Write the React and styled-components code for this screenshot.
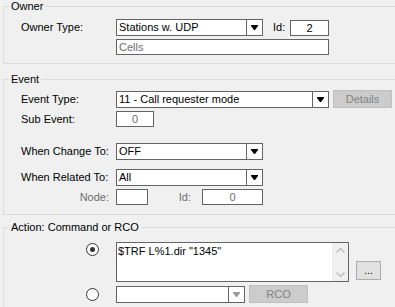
import styled, { createGlobalStyle } from 'styled-components'

const GlobalStyle = createGlobalStyle`
  html, body {
    margin: 0;
    padding: 0;
    background: #f0f0f0;
    overflow: hidden;
  }
  body {
    font-family: "Liberation Sans", Arial, sans-serif;
    font-size: 11px;
    color: #000;
  }
`

const Page = styled.div`
  width: 395px;
  height: 307px;
  overflow: hidden;
  background: #f0f0f0;
`

const Group = styled.fieldset`
  width: 420px;
  margin: ${p => p.$top}px 0 0 3px;
  padding: 0;
  border: 1px solid #dcdcdc;
  box-sizing: border-box;
  min-width: 0;
`

const Legend = styled.legend`
  margin-left: 5px;
  padding: 0 2px;
  line-height: 13px;
  font-size: 11px;
`

const Body = styled.div`
  padding: ${p => p.$pt}px 0 ${p => p.$pb}px 17px;
  display: flex;
  flex-direction: column;
`

const Row = styled.div`
  display: flex;
  align-items: ${p => p.$align || 'center'};
  margin-top: ${p => p.$gap || 0}px;
`

const Label = styled.div`
  width: 95px;
  flex: none;
  line-height: 13px;
  white-space: nowrap;
  color: ${p => (p.$dim ? '#6d6d6d' : '#000')};
  text-align: ${p => (p.$right ? 'right' : 'left')};
  padding-right: ${p => (p.$right ? 7 : 0)}px;
  box-sizing: border-box;
`

const SmallLabel = styled.div`
  width: ${p => p.$w}px;
  flex: none;
  box-sizing: border-box;
  padding-left: ${p => p.$pl || 0}px;
  padding-right: ${p => p.$pr || 0}px;
  text-align: ${p => (p.$right ? 'right' : 'left')};
  color: ${p => (p.$dim ? '#6d6d6d' : '#000')};
  line-height: 13px;
`

const Edit = styled.div`
  width: ${p => p.$w}px;
  height: 16px;
  flex: none;
  box-sizing: border-box;
  border: 1px solid #646464;
  background: #fff;
  margin-left: ${p => p.$ml || 0}px;
  padding: 0 2px;
  line-height: 14px;
  text-align: ${p => (p.$center ? 'center' : 'left')};
  color: ${p => (p.$dim ? '#6d6d6d' : '#000')};
  white-space: nowrap;
  overflow: hidden;
`

const Combo = styled.div`
  width: ${p => p.$w}px;
  height: 17px;
  flex: none;
  box-sizing: border-box;
  border: 1px solid #646464;
  background: #fff;
  display: flex;
`

const ComboText = styled.div`
  flex: 1;
  padding-left: 2px;
  line-height: 15px;
  white-space: nowrap;
  overflow: hidden;
`

const ComboButton = styled.div`
  width: 15px;
  flex: none;
  border-left: 1px solid #646464;
  display: flex;
  align-items: center;
  justify-content: center;
`

const Button = styled.div`
  width: ${p => p.$w}px;
  height: ${p => p.$h || 18}px;
  flex: none;
  box-sizing: border-box;
  margin: ${p => p.$mt || 0}px 0 0 ${p => p.$ml || 0}px;
  border: 1px solid ${p => (p.$disabled ? '#bfbfbf' : '#adadad')};
  background: ${p => (p.$disabled ? '#cccccc' : '#e1e1e1')};
  color: ${p => (p.$disabled ? '#838383' : '#000')};
  display: flex;
  align-items: center;
  justify-content: center;
  line-height: 13px;
`

const RadioCell = styled.div`
  width: 95px;
  flex: none;
  display: flex;
  justify-content: flex-end;
  padding-right: 17px;
  padding-top: ${p => p.$pt || 0}px;
  box-sizing: border-box;
`

const Radio = styled.div`
  width: 13px;
  height: 13px;
  box-sizing: border-box;
  border-radius: 50%;
  border: 1px solid #333;
  background: #fff;
  display: flex;
  align-items: center;
  justify-content: center;
  &::after {
    content: '';
    width: 5px;
    height: 5px;
    border-radius: 50%;
    background: ${p => (p.$checked ? '#333' : 'transparent')};
  }
`

const Memo = styled.div`
  width: 233px;
  height: 40px;
  flex: none;
  box-sizing: border-box;
  border: 1px solid #646464;
  background: #fff;
  display: flex;
`

const MemoText = styled.div`
  flex: 1;
  padding: 2px 1px;
  line-height: 13px;
  white-space: nowrap;
`

const ScrollBar = styled.div`
  width: 16px;
  flex: none;
  background: #f0f0f0;
  display: flex;
  flex-direction: column;
  justify-content: space-between;
  align-items: center;
  padding: 5px 0 4px;
`

const Arrow = ({ dim }) => (
  <svg width="7" height="5" viewBox="0 0 7 5">
    <path d="M0 0H7V1L4 5H3L0 1Z" fill={dim ? '#9a9a9a' : '#000'} />
  </svg>
)

const Chevron = ({ up }) => (
  <svg width="9" height="5" viewBox="0 0 9 5">
    <path
      d={up ? 'M0.5 4.5L4.5 0.5L8.5 4.5' : 'M0.5 0.5L4.5 4.5L8.5 0.5'}
      fill="none"
      stroke="#b8b8b8"
      strokeWidth="1.2"
    />
  </svg>
)

const ComboBox = ({ w, text, dim }) => (
  <Combo $w={w}>
    <ComboText>{text}</ComboText>
    <ComboButton>
      <Arrow dim={dim} />
    </ComboButton>
  </Combo>
)

export default function App() {
  return (
    <Page>
      <GlobalStyle />
      <Group $top={0}>
        <Legend>Owner</Legend>
        <Body $pt={6} $pb={8}>
          <Row>
            <Label>Owner Type:</Label>
            <ComboBox w={147} text="Stations w. UDP" />
            <SmallLabel $w={27} $pl={10}>Id:</SmallLabel>
            <Edit $w={39} $center>2</Edit>
          </Row>
          <Row $gap={3}>
            <Edit $w={213} $ml={95} $dim>Cells</Edit>
          </Row>
        </Body>
      </Group>

      <Group $top={9}>
        <Legend>Event</Legend>
        <Body $pt={4} $pb={9}>
          <Row>
            <Label>Event Type:</Label>
            <ComboBox w={213} text="11 - Call requester mode" />
            <Button $w={59} $ml={4} $disabled>Details</Button>
          </Row>
          <Row $gap={3}>
            <Label>Sub Event:</Label>
            <Edit $w={38} $center $dim>0</Edit>
          </Row>
          <Row $gap={16}>
            <Label>When Change To:</Label>
            <ComboBox w={147} text="OFF" />
          </Row>
          <Row $gap={9}>
            <Label>When Related To:</Label>
            <ComboBox w={147} text="All" />
          </Row>
          <Row $gap={3}>
            <Label $right $dim>Node:</Label>
            <Edit $w={32} />
            <SmallLabel $w={54} $pr={11} $right $dim>Id:</SmallLabel>
            <Edit $w={61} $center $dim>0</Edit>
          </Row>
        </Body>
      </Group>

      <Group $top={6}>
        <Legend>Action: Command or RCO</Legend>
        <Body $pt={8} $pb={20}>
          <Row $align="flex-start">
            <RadioCell $pt={1}>
              <Radio $checked />
            </RadioCell>
            <Memo>
              <MemoText>$TRF L%1.dir "1345"</MemoText>
              <ScrollBar>
                <Chevron up />
                <Chevron />
              </ScrollBar>
            </Memo>
            <Button $w={25} $h={19} $ml={7} $mt={19}>...</Button>
          </Row>
          <Row $gap={3}>
            <RadioCell>
              <Radio />
            </RadioCell>
            <ComboBox w={129} text="" dim />
            <Button $w={59} $ml={4} $disabled>RCO</Button>
          </Row>
        </Body>
      </Group>
    </Page>
  )
}
